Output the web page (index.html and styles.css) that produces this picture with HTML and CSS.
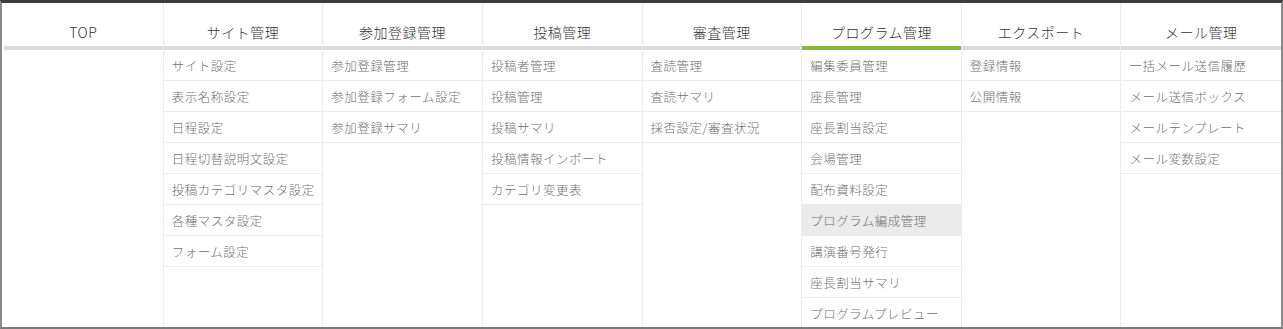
FILE: index.html
```html
<!DOCTYPE html>
<html>
<head>
    <link rel="stylesheet" href="styles.css">
</head>
<body>
    <div class="frame">
        <div class="menubar">
            <div class="col">
                <div class="head">TOP</div>
            </div>
            <div class="col">
                <div class="head">サイト管理</div>
                <div class="item">サイト設定</div>
                <div class="item">表示名称設定</div>
                <div class="item">日程設定</div>
                <div class="item">日程切替説明文設定</div>
                <div class="item">投稿カテゴリマスタ設定</div>
                <div class="item">各種マスタ設定</div>
                <div class="item">フォーム設定</div>
            </div>
            <div class="col">
                <div class="head">参加登録管理</div>
                <div class="item">参加登録管理</div>
                <div class="item">参加登録フォーム設定</div>
                <div class="item">参加登録サマリ</div>
            </div>
            <div class="col">
                <div class="head">投稿管理</div>
                <div class="item">投稿者管理</div>
                <div class="item">投稿管理</div>
                <div class="item">投稿サマリ</div>
                <div class="item">投稿情報インポート</div>
                <div class="item">カテゴリ変更表</div>
            </div>
            <div class="col">
                <div class="head">審査管理</div>
                <div class="item">査読管理</div>
                <div class="item">査読サマリ</div>
                <div class="item">採否設定/審査状況</div>
            </div>
            <div class="col">
                <div class="head active">プログラム管理</div>
                <div class="item">編集委員管理</div>
                <div class="item">座長管理</div>
                <div class="item">座長割当設定</div>
                <div class="item">会場管理</div>
                <div class="item">配布資料設定</div>
                <div class="item hover">プログラム編成管理</div>
                <div class="item">講演番号発行</div>
                <div class="item">座長割当サマリ</div>
                <div class="item">プログラムプレビュー</div>
            </div>
            <div class="col">
                <div class="head">エクスポート</div>
                <div class="item">登録情報</div>
                <div class="item">公開情報</div>
            </div>
            <div class="col">
                <div class="head">メール管理</div>
                <div class="item">一括メール送信履歴</div>
                <div class="item">メール送信ボックス</div>
                <div class="item">メールテンプレート</div>
                <div class="item">メール変数設定</div>
            </div>
        </div>
    </div>
</body>
</html>
```

FILE: styles.css
```css
*{
    margin: 0;
    padding: 0;
    box-sizing: border-box;
}
body {
    font-family: "Noto Sans CJK JP", "Noto Sans", sans-serif;
    font-weight: 300;
    background-color: #fff;
}

.frame{
    height: 329px;
    border-top: 3px solid #3c3c3c;
    border-left: 2px solid #8a8a8a;
    border-right: 2px solid #8a8a8a;
    border-bottom: 2px solid #7a7a7a;
    padding-left: 2px;
    overflow: hidden;
}
.menubar{
    display: grid;
    grid-template-columns: repeat(8, 1fr);
    height: 100%;
}
.col{
    border-right: 1px solid #ececec;
}
.col:last-child{
    border-right: none;
}
.head{
    height: 47px;
    padding-top: 19px;
    text-align: center;
    font-size: 14px;
    line-height: 20px;
    color: #333;
    border-bottom: 4px solid #dcdcdc;
    letter-spacing: 0.5px;
}
.head.active{
    border-bottom-color: #8db43c;
}
.item{
    height: 31px;
    line-height: 31px;
    padding-left: 8px;
    font-size: 12.5px;
    color: #707070;
    border-bottom: 1px solid #ececec;
    letter-spacing: 0.5px;
    white-space: nowrap;
}
.item.hover{
    background-color: #ebebeb;
}
```
